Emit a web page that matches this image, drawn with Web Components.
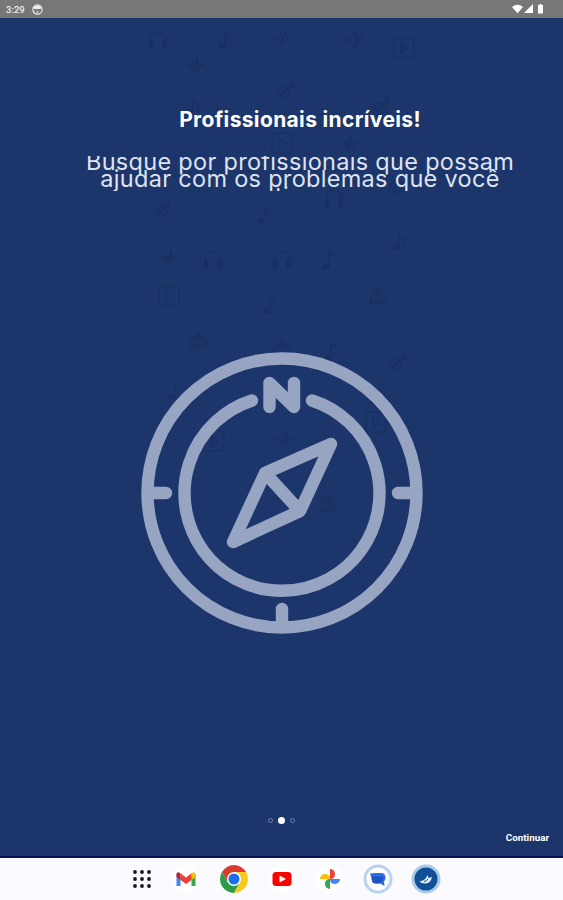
<!DOCTYPE html>
<html lang="pt-BR">
<head>
<meta charset="utf-8">
<title>Profissionais incríveis!</title>
<style>
    html, body {
        margin: 0;
        height: 100%;
    }

    body {
        font-family: Inter, "Open Sans", sans-serif;
        overflow: hidden;
    }
</style>
</head>
<body>
<onboarding-screen>
    <status-bar slot="top" time="3:29"></status-bar>
    <intro-text heading="Profissionais incríveis!">
        <span>Busque por profissionais que possam</span>
        <span>ajudar com os problemas que você</span>
        <span>tiver</span>
    </intro-text>
    <compass-art></compass-art>
    <page-dots count="3" active="1"></page-dots>
    <continue-button>Continuar</continue-button>
    <app-dock slot="bottom"></app-dock>
</onboarding-screen>

<script>
const define = (name, html, setup) => {
    const template = document.createElement("template");
    template.innerHTML = html;
    customElements.define(name, class extends HTMLElement {
        connectedCallback() {
            if (this.shadowRoot) return;
            const root = this.attachShadow({mode: "open"});
            root.appendChild(template.content.cloneNode(true));
            if (setup) setup(this, root);
        }
    });
};

// faint music icons behind the page: [symbol, centre x, centre y]
const doodles = [
    ["phones", 158, 40], ["note", 225, 40], ["spark", 283, 38], ["speaker", 355, 40], ["play", 404, 48],
    ["spark", 195, 66], ["guitar", 286, 89], ["note", 193, 106], ["guitar", 381, 106],
    ["play", 282, 143], ["spark", 349, 144],
    ["guitar", 163, 208], ["note", 264, 215], ["phones", 334, 198], ["hand", 397, 187],
    ["note", 399, 241], ["spark", 169, 258], ["phones", 213, 260], ["phones", 282, 259], ["quaver", 328, 260],
    ["play", 169, 296], ["quaver", 269, 304], ["hand", 379, 296],
    ["hand", 198, 341], ["hand", 282, 348], ["quaver", 330, 352], ["guitar", 398, 361],
    ["quaver", 174, 390], ["play", 376, 422], ["play", 214, 441], ["spark", 284, 439], ["hand", 328, 504]
];

define("music-pattern", `
    <style>
        :host {
            display: block;
            pointer-events: none;
        }

        svg {
            display: block;
            width: 100%;
            height: 100%;
            fill: none;
            stroke: #142755;
            stroke-width: 1.3;
            opacity: 0.36;
        }
    </style>
    <svg>
        <defs>
            <g id="phones">
                <path d="M-8 4v-4a8 8 0 0 1 16 0v4"/>
                <path d="M-8 1h3v8h-2l-2-3zM8 1h-3v8h2l2-3z" fill="#142755"/>
            </g>
            <g id="note">
                <path d="M0 6v-14q0 4 4 6t0 6"/>
                <ellipse cx="-3" cy="6" rx="3" ry="2" fill="#142755"/>
            </g>
            <g id="quaver">
                <path d="M1 6v-14h4v3h-4"/>
                <ellipse cx="-2" cy="7" rx="3" ry="2" fill="#142755"/>
            </g>
            <g id="spark"><path d="M-9 0h5l2-3 2 7 2-12 2 10 2-3h4M-4 2l4 4"/></g>
            <g id="speaker"><path d="M-9-3h4l6-6v18l-6-6h-4zM4-4q3 4 0 8M7-6q5 6 0 12"/></g>
            <g id="play">
                <rect x="-10" y="-10" width="20" height="20" rx="4"/>
                <path d="M-3-5l7 5-7 5z"/>
            </g>
            <g id="guitar">
                <path d="M-1 2l8-10M2 3l6-8M-6-1q5-4 8 1t-2 8q-8 3-8-3z"/>
                <circle cx="-3" cy="4" r="2" fill="#142755"/>
            </g>
            <g id="hand"><path d="M-8 0v7h14l3-8M-6 0v-4h4v6-10h3v9-5h4v6M-4 4h8"/></g>
        </defs>
    </svg>
`, (host, root) => {
    const svg = root.querySelector("svg");
    svg.insertAdjacentHTML("beforeend", doodles.map(([id, x, y]) =>
        `<use href="#${id}" x="${x}" y="${y - 18}"/>`).join(""));
});

define("onboarding-screen", `
    <style>
        :host {
            display: flex;
            flex-direction: column;
            height: 100vh;
        }

        main {
            flex: 1;
            min-height: 0;
            display: flex;
            flex-direction: column;
            align-items: center;
            background: #1c356b;
            border-bottom: 2px solid #07134a;
            box-sizing: border-box;
            position: relative;
        }

        music-pattern {
            position: absolute;
            inset: 0;
        }
    </style>
    <slot name="top"></slot>
    <main>
        <music-pattern></music-pattern>
        <slot></slot>
    </main>
    <slot name="bottom"></slot>
`);

define("status-bar", `
    <style>
        :host {
            display: flex;
            justify-content: space-between;
            align-items: center;
            height: 18px;
            box-sizing: border-box;
            padding: 0 18px 0 6px;
            background: #777;
            color: #eee;
            font: 500 9.5px Roboto, sans-serif;
        }

        div {
            display: flex;
            align-items: center;
            gap: 7px;
        }

        svg {
            display: block;
        }
    </style>
    <div>
        <span></span>
        <svg width="11" height="11" viewBox="0 0 11 11">
            <circle cx="5.5" cy="5.5" r="4.6" fill="none" stroke="#eee" stroke-width="1.2"/>
            <path d="M1.5 3.5Q5.5-.5 9.5 3.5L8.5 5h-6z" fill="#eee"/>
            <path d="M4 7.5h3L5.5 9z" fill="#eee"/>
        </svg>
    </div>
    <svg width="33" height="10" viewBox="0 0 33 10" fill="#fff">
        <path d="M0 3Q5.500-1.500 11 3L5.500 9.300z"/>
        <path d="M21 0v9h-9z"/>
        <path d="M26 1h1.500V0h2v1H31v8.500h-5z"/>
    </svg>
`, (host, root) => {
    root.querySelector("span").textContent = host.getAttribute("time");
});

define("intro-text", `
    <style>
        :host {
            display: block;
            align-self: stretch;
            padding: 88px 0 0 37px;
            text-align: center;
            color: #dfe3ee;
            position: relative;
        }

        h1 {
            margin: 0;
            font-size: 21px;
            line-height: 28px;
            font-weight: 700;
            letter-spacing: 0.35px;
            color: #fff;
        }

        /* lines are tighter than the glyphs and cut at both edges */
        .lines {
            display: flex;
            flex-direction: column;
            align-items: center;
            height: 35px;
            margin-top: 22px;
            overflow: hidden;
            font-size: 23.5px;
            line-height: 17px;
            letter-spacing: 0.3px;
            white-space: nowrap;
        }

        ::slotted(span) {
            flex: none;
            display: block;
            height: 17px;
            position: relative;
            top: -3px;
        }
    </style>
    <h1></h1>
    <div class="lines"><slot></slot></div>
`, (host, root) => {
    root.querySelector("h1").textContent = host.getAttribute("heading");
});

define("compass-art", `
    <style>
        :host {
            display: block;
            margin-top: 160.5px;
            position: relative;
        }

        svg {
            display: block;
            fill: none;
            stroke: #97a4c2;
            stroke-width: 12.4;
            stroke-linecap: round;
            stroke-linejoin: round;
        }
    </style>
    <svg width="282" height="282" viewBox="0 0 282 282">
        <circle cx="141" cy="141" r="134.500"/>
        <path d="M111 48.500A97.500 97.500 0 1 0 171 48.500"/>
        <path d="M10 141h15M272 141h-15M141 272v-15"/>
        <path d="M128.500 55V31L153 55V31"/>
        <path d="M190 92L124 121L92 190L159 159Z"/>
        <path d="M125 122L158 158"/>
    </svg>
`);

define("page-dots", `
    <style>
        :host {
            display: flex;
            align-items: center;
            gap: 5px;
            height: 8px;
            margin-top: 182.5px;
            position: relative;
        }

        i {
            width: 5px;
            height: 5px;
            box-sizing: border-box;
            border: 1px solid #6b80a6;
            border-radius: 50%;
        }

        i.active {
            width: 7px;
            height: 7px;
            border: 0;
            background: #fff;
        }
    </style>
`, (host, root) => {
    for (let n = 0; n < Number(host.getAttribute("count")); n++) {
        const dot = document.createElement("i");
        if (n === Number(host.getAttribute("active"))) dot.className = "active";
        root.appendChild(dot);
    }
});

define("continue-button", `
    <style>
        :host {
            display: block;
            align-self: flex-end;
            margin: 8px 14px 0 0;
            font: 700 9.800px/12px Roboto, sans-serif;
            color: #fff;
            position: relative;
        }
    </style>
    <slot></slot>
`);

define("app-dock", `
    <style>
        :host {
            display: flex;
            justify-content: center;
            align-items: center;
            gap: 18px;
            height: 42px;
            background: #fafaff;
        }

        svg {
            display: block;
            width: 30px;
            height: 30px;
        }

        /* the launcher grid sits closer to the apps */
        .apps {
            margin: 0 -4.5px 0 4.5px;
        }
    </style>
    <svg viewBox="-15 -15 30 30" fill="#171717" class="apps"></svg>
    <svg viewBox="-15 -15 30 30">
        <circle r="14" fill="#fff"/>
        <path d="M-9.500-5V7h4v-9z" fill="#4285f4"/>
        <path d="M9.500-5V7h-4v-9z" fill="#34a853"/>
        <path d="M5.500-5.500l2-1.300q2 0 2 2V-2l-4 3z" fill="#fbbc04"/>
        <path d="M-5.500-5.800L0-1.500l5.500-4.300V1L0 5l-5.500-4z" fill="#ea4335"/>
        <path d="M-9.500-5q0-2 2-1.800l2 1.300V1l-4-3z" fill="#c5221f"/>
    </svg>
    <svg viewBox="-15 -15 30 30">
        <path d="M-12.100-7A14 14 0 0 1 12.100-7H0L-6 3.500z" fill="#db3b2d"/>
        <path d="M-12.100-7A14 14 0 0 0 0 14L6 3.500-6 3.500z" fill="#2b9c48"/>
        <path d="M12.100-7A14 14 0 0 1 0 14L6 3.500 0-7z" fill="#fbc81c"/>
        <circle r="7" fill="#fff"/>
        <circle r="5.500" fill="#1a6fe8"/>
    </svg>
    <svg viewBox="-15 -15 30 30">
        <circle r="14" fill="#fff"/>
        <rect x="-9.500" y="-7" width="19" height="14" rx="3.500" fill="#f00"/>
        <path d="M-2.500-3.500L4 0-2.500 3.500z" fill="#fff"/>
    </svg>
    <svg viewBox="-15 -15 30 30">
        <circle r="14" fill="#fff"/>
        <path d="M0 0v-10a5 5 0 0 1 5 5q0 5-5 5z" fill="#ea4335"/>
        <path d="M0 0h10a5 5 0 0 1-5 5q-5 0-5-5z" fill="#4285f4"/>
        <path d="M0 0v10a5 5 0 0 1-5-5q0-5 5-5z" fill="#34a853"/>
        <path d="M0 0h-10a5 5 0 0 1 5-5q5 0 5 5z" fill="#fbbc04"/>
    </svg>
    <svg viewBox="-15 -15 30 30">
        <circle r="13" fill="#fff" stroke="#b7d3f0" stroke-width="3"/>
        <path d="M-8-5.500L-3-6H3Q7.500-6 7.500-1.500 7.500 1 6 2.500L6.500 7 2 4.500H-2.500Q-6.500 4.500-6.500-1z" fill="#2f6fe6"/>
        <path d="M-6.300-2.500H5.500Q5.500 3.500 0 4.500H-2.500Q-6.500 4.500-6.300-2.500z" fill="#1c54c4"/>
    </svg>
    <svg viewBox="-15 -15 30 30">
        <circle r="13" fill="#115095" stroke="#a7cbe9" stroke-width="3"/>
        <path d="M-7 2Q-3 3 0-1l1.500-3 1 3L6-2 5 1Q3 4.500-1 4.500-5 4.500-7 2z" fill="#dcedf8"/>
        <path d="M-2 2.500Q1 2 2 0" fill="none" stroke="#115095"/>
    </svg>
`, (host, root) => {
    const grid = [-7, 0, 7].flatMap(y => [-7, 0, 7].map(x => `<circle cx="${x}" cy="${y}" r="1.900"/>`));
    root.querySelector(".apps").innerHTML = grid.join("");
});
</script>
</body>
</html>
